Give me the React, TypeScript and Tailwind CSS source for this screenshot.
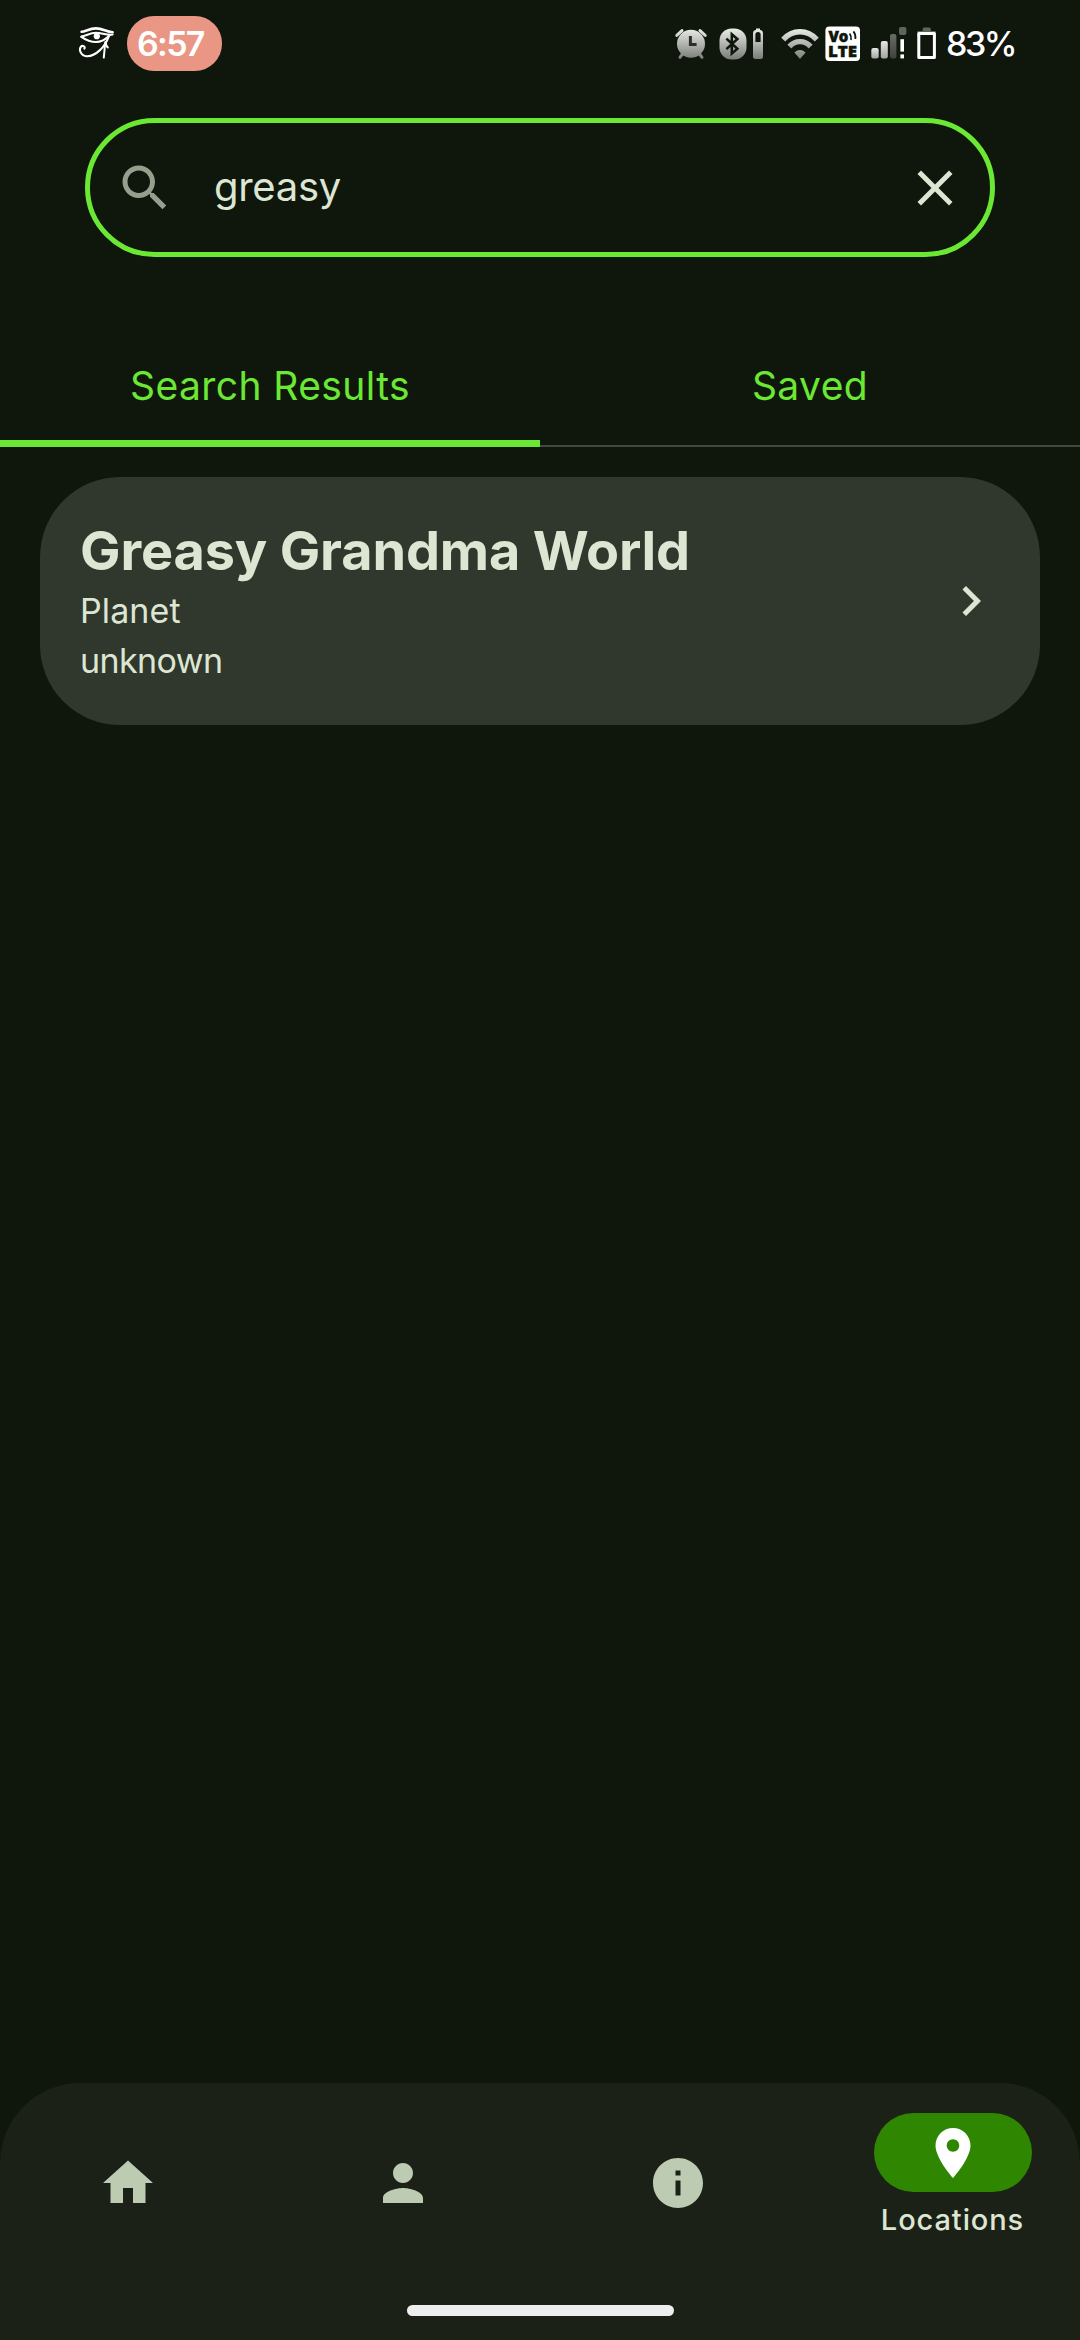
import type { ReactNode } from "react";

function Gradients() {
  return (
    <svg className="absolute h-0 w-0" aria-hidden="true">
      <defs>
        <linearGradient id="fade" gradientUnits="userSpaceOnUse" x1="0" y1="0" x2="0" y2="32">
          <stop offset="0" stopColor="#eceeea" />
          <stop offset="1" stopColor="#777b74" />
        </linearGradient>
        <linearGradient id="bar1" x1="0" y1="0" x2="0" y2="1">
          <stop offset="0" stopColor="#e6e7e5" />
          <stop offset="1" stopColor="#a3a6a1" />
        </linearGradient>
        <linearGradient id="bar3" x1="0" y1="0" x2="0" y2="1">
          <stop offset="0" stopColor="#686d65" />
          <stop offset="1" stopColor="#3d433a" />
        </linearGradient>
      </defs>
    </svg>
  );
}

function EyeIcon() {
  return (
    <svg width="37" height="33" viewBox="0 0 37 33" fill="none" stroke="#fff" strokeLinecap="round">
      <path d="M3.6 4.8C7 5 11 1.4 18 1.4C25 1.4 28 5 34.6 5.2" strokeWidth="2.6" />
      <path d="M3.4 9.6C8 8.8 12 5.8 18 5.8C24 5.8 27 8 34.6 7.6" strokeWidth="2" />
      <path d="M3.4 9.8C8 13 12 15 18 15C24.5 15 28 12 31.5 8.4" strokeWidth="2.2" />
      <circle cx="18.8" cy="9.2" r="3.1" fill="#fff" stroke="none" />
      <path d="M30.5 10C27.5 19 18 29.6 8.6 29.2C2.6 28.8 0.8 22.6 2.8 19.8C4.6 17.8 7.4 19.4 6.4 21.6" strokeWidth="2.1" />
      <path d="M27 16L26.6 22L25.8 30.6M27.4 15C28 18 28.6 19.6 29.8 20.4" strokeWidth="2" />
    </svg>
  );
}

function AlarmIcon() {
  return (
    <svg width="34" height="32" viewBox="0 0 34 32">
      <g fill="none" stroke="url(#fade)" strokeWidth="3" strokeLinecap="round">
        <path d="M2.8 7.4L8 2.6M31.2 7.4L26 2.6" />
        <path d="M8.5 26L6 29.3M25.5 26L28 29.3" />
      </g>
      <circle cx="17" cy="15.8" r="14" fill="url(#fade)" />
      <path d="M16.4 8V16.6H22.6" fill="none" stroke="#2b3028" strokeWidth="3" />
    </svg>
  );
}

function BluetoothIcon() {
  return (
    <svg width="28" height="32" viewBox="0 0 28 32">
      <rect x="0.5" y="0.5" width="27" height="31" rx="12" fill="url(#fade)" />
      <path d="M7.4 10.6L18.4 20.8L12.8 25.6V6.2L18.4 11L7.4 21.2" fill="none" stroke="#0f160c" strokeWidth="2.5" />
    </svg>
  );
}

function DeviceBatteryIcon() {
  return (
    <svg width="12" height="32" viewBox="0 0 12 32">
      <path d="M4 0.5H8V2Q11 2.4 11 5.5V28.5Q11 31 8.5 31H3.5Q1 31 1 28.5V5.5Q1 2.4 4 2Z" fill="url(#fade)" />
      <path d="M3.4 14V6.6Q3.4 4 6 4Q8.6 4 8.6 6.6V14Z" fill="#0f160c" />
    </svg>
  );
}

function WifiIcon() {
  return (
    <svg width="38" height="32" viewBox="0 0 38 32">
      <g fill="none" stroke="url(#fade)" strokeWidth="5.4">
        <path d="M2.2 11.6C11.5 1.2 26.5 1.2 35.8 11.6" />
        <path d="M8.4 18.6C14.2 12 23.8 12 29.6 18.6" />
      </g>
      <path d="M13.4 24.4Q19 19.6 24.6 24.4L19 31Z" fill="url(#fade)" />
    </svg>
  );
}

function VolteIcon() {
  return (
    <svg width="36" height="36" viewBox="0 0 36 36" fontFamily="Open Sans, Noto Sans, sans-serif" fontWeight="800">
      <rect x="0.4" y="0.6" width="34.6" height="34.4" rx="4" fill="#fff" />
      <text fontSize="16" fill="#0f160c" stroke="#0f160c" strokeWidth="0.5">
        <tspan x="3.4" y="16.2" textLength="20" lengthAdjust="spacingAndGlyphs">Vo</tspan>
        <tspan x="3" y="31.4" textLength="29" lengthAdjust="spacingAndGlyphs">LTE</tspan>
      </text>
      <path d="M24.6 7.4Q26.6 10 26 14M28.4 5.4Q31 8.6 30.4 13" fill="none" stroke="#0f160c" strokeWidth="1.7" />
    </svg>
  );
}

function SignalIcon() {
  return (
    <svg width="38" height="33" viewBox="0 0 38 33">
      <rect x="0.3" y="21" width="7.4" height="10.4" rx="2" fill="url(#bar1)" />
      <rect x="9.8" y="14" width="7" height="17.4" rx="2" fill="url(#bar1)" />
      <rect x="19" y="7" width="6.4" height="24.4" rx="2" fill="url(#bar3)" />
      <rect x="28" y="0" width="7.4" height="8" rx="2" fill="#5f645c" />
      <rect x="29.4" y="12.2" width="3.6" height="12.4" fill="#fff" />
      <rect x="29.4" y="27.4" width="3.6" height="4" fill="#fff" />
    </svg>
  );
}

function BatteryIcon() {
  return (
    <svg width="20" height="33" viewBox="0 0 20 33">
      <path d="M5.6 4V2Q5.6 0.4 7.2 0.4H12.2Q13.8 0.4 13.8 2V4H18.6V10H0.4V4Z" fill="#5f645c" />
      <rect x="1.8" y="6.4" width="15.6" height="24.2" fill="#0f160c" stroke="#fff" strokeWidth="3" strokeLinejoin="round" />
    </svg>
  );
}

function MaterialIcon({ d, className }: { d: string; className: string }) {
  return (
    <svg viewBox="0 0 24 24" fill="currentColor" className={className}>
      <path d={d} />
    </svg>
  );
}

const paths = {
  search:
    "M15.5 14h-.79l-.28-.27C15.41 12.59 16 11.11 16 9.5 16 5.91 13.09 3 9.5 3S3 5.91 3 9.5 5.91 16 9.5 16c1.61 0 3.09-.59 4.23-1.57l.27.28v.79l5 4.99L20.49 19l-4.99-5zm-6 0C7.01 14 5 11.99 5 9.5S7.01 5 9.5 5 14 7.01 14 9.5 11.99 14 9.5 14z",
  close: "M19 6.41L17.59 5 12 10.59 6.41 5 5 6.41 10.59 12 5 17.59 6.41 19 12 13.41 17.59 19 19 17.59 13.41 12z",
  chevron: "M10 6L8.59 7.41 13.17 12l-4.58 4.59L10 18l6-6z",
  home: "M10 20v-6h4v6h5v-8h3L12 3 2 12h3v8z",
  person: "M12 12c2.21 0 4-1.79 4-4s-1.79-4-4-4-4 1.79-4 4 1.79 4 4 4zm0 2c-2.67 0-8 1.34-8 4v2h16v-2c0-2.66-5.33-4-8-4z",
  info: "M12 2C6.48 2 2 6.48 2 12s4.48 10 10 10 10-4.48 10-10S17.52 2 12 2zm1 15h-2v-6h2v6zm0-8h-2V7h2v2z",
  place: "M12 2C8.13 2 5 5.13 5 9c0 5.25 7 13 7 13s7-7.75 7-13c0-3.87-3.13-7-7-7zm0 9.5c-1.38 0-2.5-1.12-2.5-2.5s1.12-2.5 2.5-2.5 2.5 1.12 2.5 2.5-1.12 2.5-2.5 2.5z",
};

function StatusBar() {
  return (
    <header className="flex h-[87px] items-center pr-[64px] pl-[78px] text-[34px] leading-none font-medium text-white">
      <EyeIcon />
      <div className="ml-[12px] flex h-[55px] w-[95px] items-center rounded-[27px] bg-[#e99684] pl-[10px] font-semibold tracking-[-1.7px]">6:57</div>
      <div className="ml-[452px] flex items-center">
        <AlarmIcon />
        <div className="ml-[11px]"><BluetoothIcon /></div>
        <div className="ml-[5px]"><DeviceBatteryIcon /></div>
        <div className="ml-[17px]"><WifiIcon /></div>
        <div className="ml-[6px]"><VolteIcon /></div>
        <div className="ml-[10px]"><SignalIcon /></div>
        <div className="ml-[8px]"><BatteryIcon /></div>
        <span className="ml-[9px] tracking-[-2.5px]">83%</span>
      </div>
    </header>
  );
}

function NavItem({ d, children }: { d: string; children?: ReactNode }) {
  if (!children) {
    return (
      <button className="flex h-[200px] w-[255px] items-center justify-center text-[#bdcbb2]">
        <MaterialIcon d={d} className="size-[60px]" />
      </button>
    );
  }
  return (
    <button className="flex h-[200px] w-[255px] flex-col items-center pt-[30px]">
      <span className="flex h-[79px] w-[158px] items-center justify-center rounded-full bg-[#2f8601] text-white">
        <MaterialIcon d={d} className="size-[60px]" />
      </span>
      <span className="mt-[8px] text-[29px] leading-[40px] font-medium tracking-[0.9px] text-[#dde6d3]">{children}</span>
    </button>
  );
}

export default function App() {
  return (
    <div className="flex h-[2340px] w-[1080px] flex-col bg-[#0f160c] font-['Inter','Roboto',sans-serif] text-[#dde6d3]">
      <Gradients />
      <StatusBar />

      <div className="mx-[85px] mt-[31px] flex h-[139px] shrink-0 items-center rounded-full border-[5px] border-[#6be833] px-[25px]">
        <MaterialIcon d={paths.search} className="size-[60px] shrink-0 text-[#989e8e]" />
        <span className="ml-[39px] flex-1 pb-[1px] text-[40px] leading-[60px] tracking-[-0.3px]">greasy</span>
        <MaterialIcon d={paths.close} className="size-[60px] shrink-0" />
      </div>

      <nav className="mt-[70px] grid h-[120px] shrink-0 grid-cols-2 text-[39px] leading-[50px] tracking-[0.4px] text-[#6be833]">
        <button className="flex items-center justify-center border-b-[7px] border-[#6be833] pt-[5px]">Search Results</button>
        <button className="flex items-center justify-center border-b-2 border-[#43493a]">Saved</button>
      </nav>

      <main className="flex-1 px-[40px] pt-[30px]">
        <article className="flex h-[248px] items-center justify-between rounded-[80px] bg-[#30372c] pr-[39px] pl-[40px]">
          <div className="text-[34px] leading-[50px]">
            <h2 className="text-[54px] leading-[70px] font-bold tracking-[-0.15px]">Greasy Grandma World</h2>
            <p className="tracking-[0.1px]">Planet</p>
            <p className="tracking-[-0.6px]">unknown</p>
          </div>
          <MaterialIcon d={paths.chevron} className="size-[60px]" />
        </article>
      </main>

      <footer className="flex h-[257px] shrink-0 flex-col items-center justify-between rounded-t-[80px] bg-[#1b2117] pb-[24px]">
        <nav className="flex gap-[20px]">
          <NavItem d={paths.home} />
          <NavItem d={paths.person} />
          <NavItem d={paths.info} />
          <NavItem d={paths.place}>Locations</NavItem>
        </nav>
        <div className="h-[11px] w-[267px] rounded-full bg-[#eeeeee]" />
      </footer>
    </div>
  );
}
